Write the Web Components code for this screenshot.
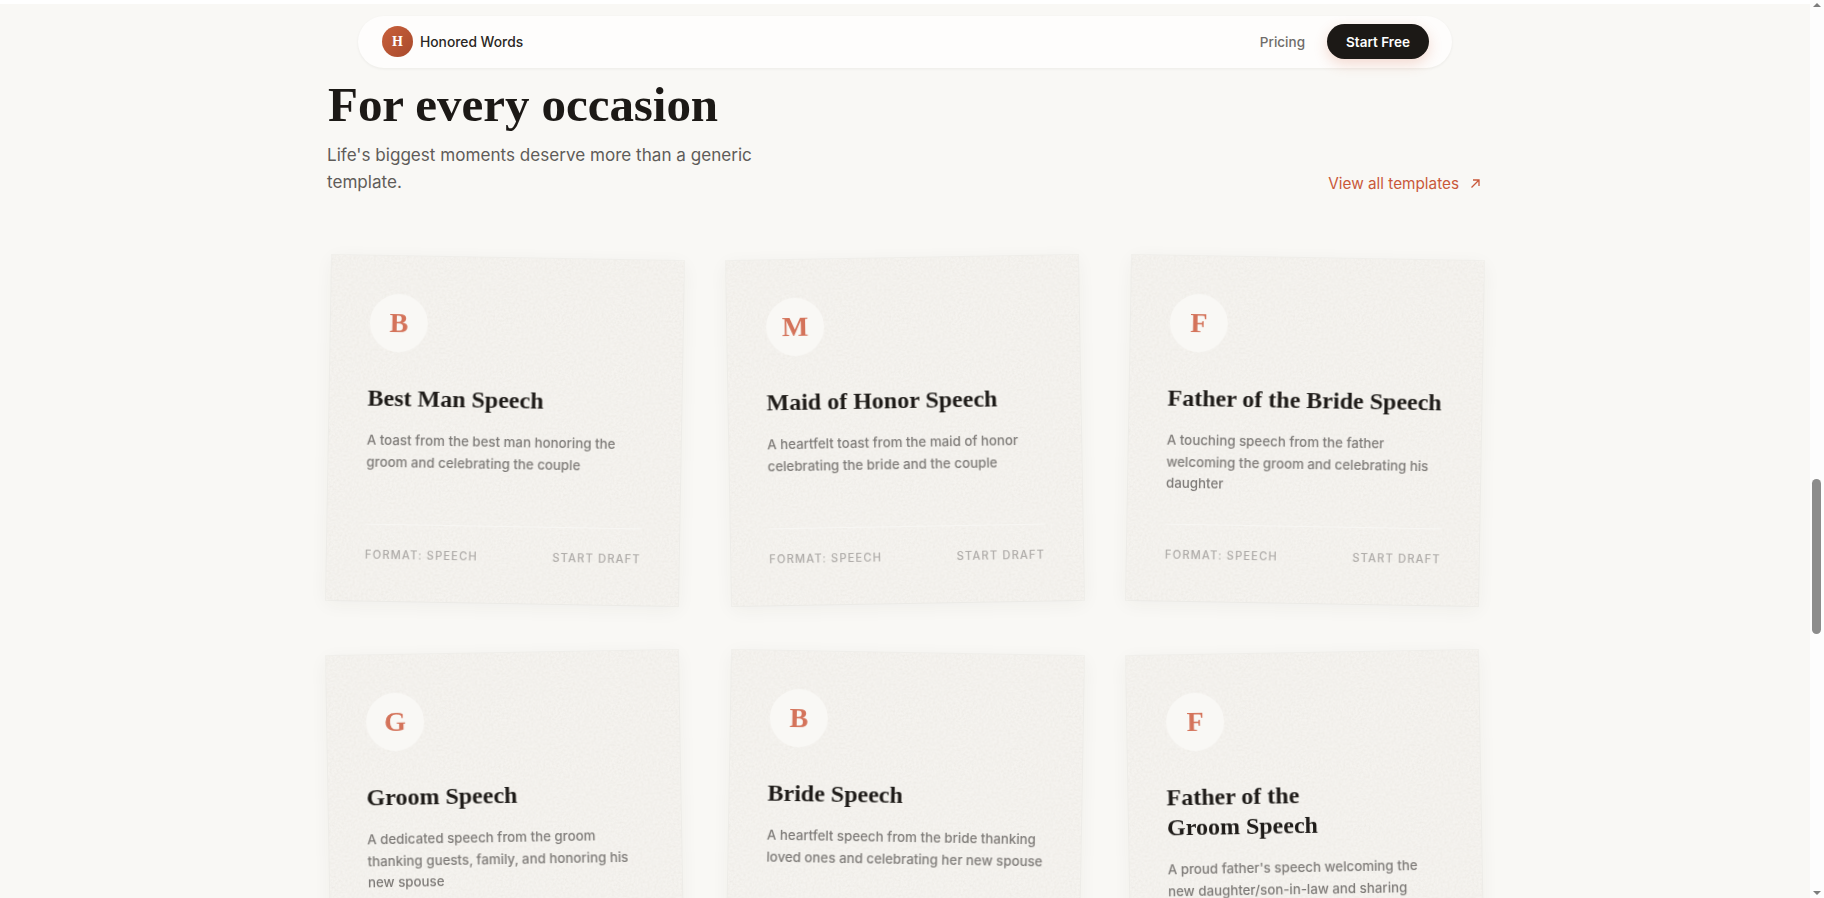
<!DOCTYPE html>
<html lang="en">
<head>
<meta charset="utf-8">
<title>Honored Words</title>
<style>
html, body { margin: 0; height: 100%; overflow: hidden; background: #f9f8f5; }
body { font-family: 'Inter', sans-serif; }
</style>
</head>
<body>
<page-shell>
    <site-nav></site-nav>
    <occasion-section>
        <template-card tilt="1" letter="B" name="Best Man Speech" text="A toast from the best man honoring the groom and celebrating the couple"></template-card>
        <template-card tilt="-1" letter="M" name="Maid of Honor Speech" text="A heartfelt toast from the maid of honor celebrating the bride and the couple"></template-card>
        <template-card tilt="1" letter="F" name="Father of the Bride Speech" text="A touching speech from the father welcoming the groom and celebrating his daughter"></template-card>
        <template-card tilt="-1" letter="G" name="Groom Speech" text="A dedicated speech from the groom thanking guests, family, and honoring his new spouse"></template-card>
        <template-card tilt="1" letter="B" name="Bride Speech" text="A heartfelt speech from the bride thanking loved ones and celebrating her new spouse"></template-card>
        <template-card tilt="-1" letter="F" name="Father of the Groom Speech" text="A proud father's speech welcoming the new daughter/son-in-law and sharing"></template-card>
    </occasion-section>
</page-shell>

<script>
class PageShell extends HTMLElement {
    constructor() {
        super()
        this._shadowDom = this.attachShadow({mode: 'open'})
    }
    connectedCallback() {
        this._shadowDom.innerHTML = `
        <style>
        :host { display: flex; height: 898px; overflow: hidden; background: #f9f8f5; }
        #view { flex: 1; min-width: 0; overflow: hidden; display: flex; flex-direction: column; }
        #strip { height: 4px; flex: none; background: #fff; }
        #track {
            width: 14px; flex: none; background: #fdfdfd;
            display: flex; flex-direction: column; align-items: center; justify-content: space-between;
            padding: 3px 0; box-sizing: border-box;
        }
        #thumb { position: absolute; top: 479px; right: 3px; width: 9px; height: 155px; border-radius: 5px; background: #8c8c8c; }
        .up { width: 0; height: 0; border: 4.5px solid transparent; border-top: 0; border-bottom: 4.5px solid #7d7d7d; }
        .down { width: 0; height: 0; border: 4.5px solid transparent; border-bottom: 0; border-top: 4.5px solid #7d7d7d; }
        </style>
        <div id="view"><div id="strip"></div><slot></slot></div>
        <div id="track"><div class="up"></div><div id="thumb"></div><div class="down"></div></div>
        `
    }
}

class SiteNav extends HTMLElement {
    constructor() {
        super()
        this._shadowDom = this.attachShadow({mode: 'open'})
    }
    connectedCallback() {
        this._shadowDom.innerHTML = `
        <style>
        :host { display: block; flex: none; position: relative; z-index: 2; padding-top: 12px; }
        nav {
            width: 1094px; height: 52px; margin: 0 auto; box-sizing: border-box;
            display: flex; align-items: center; justify-content: space-between;
            padding: 0 23px 1px 24px;
            background: #fefdfc; border-radius: 26px;
            box-shadow: 0 1px 3px rgba(40, 30, 20, .06);
        }
        .brand { display: flex; align-items: center; gap: 7px; font-size: 13.8px; font-weight: 500; color: #2a2724; }
        .logo {
            width: 31px; height: 31px; border-radius: 50%;
            background: linear-gradient(135deg, #c8603c, #a94a2c);
            display: flex; align-items: center; justify-content: center;
            font: 700 14px 'Liberation Serif', serif; color: #fff;
        }
        .links { display: flex; align-items: center; gap: 22px; }
        .price { font-size: 13.5px; font-weight: 500; color: #6f6c69; }
        .start {
            width: 102px; height: 35px; border-radius: 18px; background: #1c1916; color: #fff;
            display: flex; align-items: center; justify-content: center;
            font-size: 13.5px; font-weight: 600;
            box-shadow: 0 5px 14px rgba(205, 90, 55, .22);
        }
        </style>
        <nav>
            <div class="brand"><span class="logo">H</span><span>Honored Words</span></div>
            <div class="links"><span class="price">Pricing</span><span class="start">Start Free</span></div>
        </nav>
        `
    }
}

class OccasionSection extends HTMLElement {
    constructor() {
        super()
        this._shadowDom = this.attachShadow({mode: 'open'})
    }
    connectedCallback() {
        this._shadowDom.innerHTML = `
        <style>
        :host { display: block; width: 1152px; margin: 9px auto 0; }
        header { display: flex; justify-content: space-between; align-items: flex-end; margin-bottom: 63px; }
        #intro { margin-left: -2px; }
        h2 { margin: 0 0 8px 1px; font: 700 49px/56px 'Liberation Serif', serif; color: #1c1916; letter-spacing: -.05px; }
        p { margin: 0; width: 448px; font-size: 17.1px; line-height: 27px; color: #5f5c59; }
        a { display: flex; align-items: center; gap: 11px; font-size: 15.3px; font-weight: 400; color: #c9583a; margin-bottom: 2px; }
        svg { display: block; }
        #grid { display: grid; grid-template-columns: repeat(3, 352px); column-gap: 48px; row-gap: 50px; }
        </style>
        <header>
            <div id="intro">
                <h2>For every occasion</h2>
                <p>Life's biggest moments deserve more than a generic template.</p>
            </div>
            <a>View all templates
                <svg width="11" height="11" viewBox="0 0 11 11" fill="none" stroke="#c9583a" stroke-width="1.3"><path d="M1.5 9.5 L9 2 M3 2 H9 V8"/></svg>
            </a>
        </header>
        <div id="grid"><slot></slot></div>
        `
    }
}

const paper = "url(\"data:image/svg+xml,%3Csvg xmlns='http://www.w3.org/2000/svg' width='240' height='240'%3E%3Cfilter id='n'%3E%3CfeTurbulence type='fractalNoise' baseFrequency='.45' numOctaves='2'/%3E%3CfeColorMatrix values='0 0 0 0 .42 0 0 0 0 .38 0 0 0 0 .32 .2 0 0 0 -.07'/%3E%3C/filter%3E%3Crect width='240' height='240' filter='url(%23n)'/%3E%3C/svg%3E\")"

class TemplateCard extends HTMLElement {
    constructor() {
        super()
        this._shadowDom = this.attachShadow({mode: 'open'})
    }
    connectedCallback() {
        const tilt = this.getAttribute('tilt')
        this._shadowDom.innerHTML = `
        <style>
        :host {
            display: flex; flex-direction: column; box-sizing: border-box;
            min-height: 345px; padding: 38px 38px 0 38px;
            background: #f5f3ef ${paper};
            transform: rotate(${tilt}deg);
            will-change: transform;
            box-shadow: 0 0 0 1px rgba(60, 50, 40, .035), 0 4px 18px rgba(60, 50, 40, .05);
        }
        .badge {
            width: 58px; height: 58px; border-radius: 50%; background: #f9f8f5; flex: none;
            display: flex; align-items: center; justify-content: center;
            font: 700 28px 'Liberation Serif', serif; color: #d4735a;
            margin: 0 0 31px 1px;
        }
        h3 { margin: 0 0 17px; font: 700 24px/30px 'Liberation Serif', serif; color: #1f1c19; text-wrap: balance; }
        p { margin: 0 -2px 0 0; font-size: 13.3px; font-weight: 450; line-height: 21.6px; color: #7d7a77; }
        footer {
            margin-top: auto; height: 77px; box-sizing: border-box; padding-top: 23px;
            border-top: 1px solid #f7f6f3;
            display: flex; justify-content: space-between;
            font-size: 11.2px; font-weight: 500; line-height: 14px; letter-spacing: .1em; color: #aeaba8;
            text-transform: uppercase;
        }
        </style>
        <div class="badge">${this.getAttribute('letter')}</div>
        <h3>${this.getAttribute('name')}</h3>
        <p>${this.getAttribute('text')}</p>
        <footer><span>Format: Speech</span><span>Start Draft</span></footer>
        `
    }
}

window.customElements.define('page-shell', PageShell)
window.customElements.define('site-nav', SiteNav)
window.customElements.define('occasion-section', OccasionSection)
window.customElements.define('template-card', TemplateCard)
</script>
</body>
</html>
